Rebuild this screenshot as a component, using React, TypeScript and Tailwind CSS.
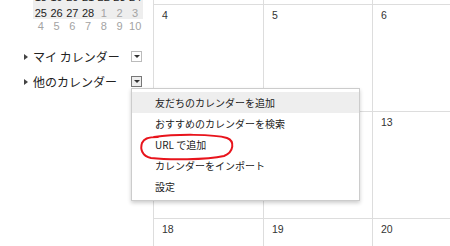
import React from 'react';

const num = { fontFamily: '"Liberation Sans", Arial, sans-serif' };
const jp = { fontFamily: '"Noto Sans CJK JP", "Noto Sans", sans-serif' };

const miniRows = [
  { days: ['18', '19', '20', '21', '22', '23', '24'], dim: [] as number[], shade: true, h: 'h-[15px] items-start' },
  { days: ['25', '26', '27', '28', '1', '2', '3'], dim: [4, 5, 6], shade: true, h: 'h-[13px] items-center' },
  { days: ['4', '5', '6', '7', '8', '9', '10'], dim: [0, 1, 2, 3, 4, 5, 6], shade: false, h: 'h-[13px] items-center' },
];

const menuItems = [
  '友だちのカレンダーを追加',
  'おすすめのカレンダーを検索',
  'URL で追加',
  'カレンダーをインポート',
  '設定',
];

// 11, 12 はメニューの下に隠れている
const weeks = [
  { h: 'h-[4px]', border: false, days: ['', '', '', ''] },
  { h: 'h-[107px]', border: true, days: ['4', '5', '6', ''] },
  { h: 'h-[107px]', border: true, days: ['', '', '13', ''] },
  { h: 'h-[40px]', border: true, days: ['18', '19', '20', ''] },
];

function Caret() {
  return <span className="w-0 h-0 border-y-[3px] border-y-transparent border-l-[4px] border-l-[#444]" />;
}

function DropBox({ active }: { active?: boolean }) {
  return (
    <span
      className={`w-[11px] h-[11px] flex items-center justify-center border ${
        active ? 'border-[#777] bg-[#eee]' : 'border-[#bbb] bg-white'
      }`}
    >
      <span className="w-0 h-0 border-x-[3px] border-x-transparent border-t-[3px] border-t-[#333]" />
    </span>
  );
}

export default function App() {
  return (
    <div className="relative w-[450px] h-[246px] overflow-hidden bg-white flex">
      {/* サイドバー */}
      <aside className="w-[153px] shrink-0 flex flex-col">
        <div className="mt-[-9px] ml-[33px] w-[110px] text-[11px] leading-[12px]" style={num}>
          {miniRows.map((row, i) => (
            <div key={i} className={`flex ${row.h} ${row.shade ? 'bg-[#eeeeee]' : ''}`}>
              {row.days.map((d, j) => (
                <span
                  key={j}
                  className={`flex-1 text-center ${row.dim.includes(j) ? 'text-[#a3a3a3]' : 'text-[#222]'}`}
                >
                  {d}
                </span>
              ))}
            </div>
          ))}
        </div>

        <div className="mt-[12px] flex flex-col text-[12px] text-[#222]" style={jp}>
          <div className="h-[25px] flex items-center pl-[24px] pr-[11px]">
            <Caret />
            <span className="ml-[5px] flex-1">マイ カレンダー</span>
            <DropBox />
          </div>
          <div className="h-[25px] flex items-center pl-[24px] pr-[11px]">
            <Caret />
            <span className="ml-[5px] flex-1">他のカレンダー</span>
            <DropBox active />
          </div>
        </div>
      </aside>

      {/* 月表示 */}
      <main className="flex-1 border-l border-[#dddddd] flex flex-col text-[10.5px] leading-[12px] text-[#333]" style={num}>
        {weeks.map((w, i) => (
          <div key={i} className={`flex shrink-0 ${w.h} ${w.border ? 'border-t border-[#dddddd]' : ''}`}>
            {w.days.map((d, j) => (
              <div
                key={j}
                className={`${j === 0 ? 'w-[110px]' : 'w-[109px]'} shrink-0 border-r border-[#dddddd] pl-[8px] pt-[4px]`}
              >
                {d}
              </div>
            ))}
          </div>
        ))}
      </main>

      {/* メニュー */}
      <div
        className="absolute left-[131px] top-[88px] w-[229px] py-[3px] bg-white border border-[#cccccc] shadow-[0_2px_4px_rgba(0,0,0,0.2)] text-[10px] text-[#222]"
        style={jp}
      >
        {menuItems.map((m, i) => (
          <div key={m} className={`h-[21px] flex items-center pl-[23px] ${i === 0 ? 'bg-[#eeeeee]' : ''}`}>
            {m}
          </div>
        ))}
      </div>

      {/* 赤い丸 */}
      <svg className="absolute left-[138px] top-[133px]" width="98" height="28" viewBox="0 0 98 28" fill="none">
        <path
          d="M16 4 C38 1 76 1 89 5 C97 8 96 19 86 23 C68 27 30 27 13 25 C4 23 2 16 4 10 C6 6 9 4 20 4"
          stroke="#e8141c"
          strokeWidth="2"
          strokeLinecap="round"
        />
      </svg>
    </div>
  );
}
